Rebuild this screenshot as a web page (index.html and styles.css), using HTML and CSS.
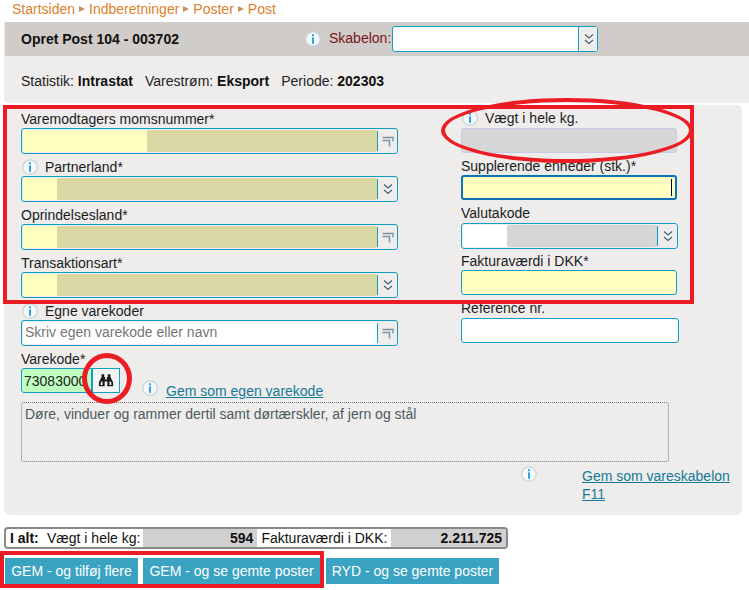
FILE: index.html
```html
<!DOCTYPE html>
<html lang="da">
<head>
<meta charset="utf-8">
<title>Opret Post</title>
<link rel="stylesheet" href="styles.css">
</head>
<body>
<svg class="defs" width="0" height="0" aria-hidden="true">
  <defs>
    <symbol id="info" viewBox="0 0 16 16">
      <circle cx="8" cy="8" r="7.2" fill="#f6f8f9" stroke="#c3d3da" stroke-width="1.2"/>
      <rect x="7" y="3.2" width="2" height="2" fill="#2aa6e6"/>
      <rect x="7" y="6.4" width="2" height="6.4" fill="#2aa6e6"/>
    </symbol>
    <symbol id="chev" viewBox="0 0 12 12">
      <path d="M2 1.500 6 5 10 1.500M2 7 6 10.500 10 7" fill="none" stroke="#3f5f75" stroke-width="1.100"/>
    </symbol>
    <symbol id="corner" viewBox="0 0 12 12">
      <path d="M0.500 2.500H11V6.500M0.500 5.500H7.500V11.500" fill="none" stroke="#7b93a1" stroke-width="1.400"/>
    </symbol>
  </defs>
</svg>

<nav class="crumbs">
  <span>Startsiden</span><i class="sep"></i><span>Indberetninger</span><i class="sep"></i><span>Poster</span><i class="sep"></i><span>Post</span>
</nav>

<header class="head">
  <div class="head-bar">
    <h1>Opret Post 104 - 003702</h1>
    <div class="skabelon">
      <svg class="ico"><use href="#info"/></svg>
      <label class="skabelon-label">Skabelon:</label>
      <div class="box box-template">
        <input class="inp white grow" type="text">
        <span class="addon"><svg class="ico-s"><use href="#chev"/></svg></span>
      </div>
    </div>
  </div>
  <p class="stat">Statistik: <b>Intrastat</b><span class="stat-gap"></span>Varestrøm: <b>Eksport</b><span class="stat-gap"></span>Periode: <b>202303</b></p>
</header>

<main class="panel">
  <div class="cols">
    <div class="col-left">
      <div class="fld">
        <label class="lbl">Varemodtagers momsnummer*</label>
        <div class="box">
          <input class="inp yellow w-124" type="text"><span class="redact olive"></span>
          <span class="addon"><svg class="ico-s"><use href="#corner"/></svg></span>
        </div>
      </div>
      <div class="fld">
        <label class="lbl"><svg class="ico"><use href="#info"/></svg>Partnerland*</label>
        <div class="box">
          <input class="inp yellow w-34" type="text"><span class="redact olive"></span>
          <span class="addon"><svg class="ico-s"><use href="#chev"/></svg></span>
        </div>
      </div>
      <div class="fld">
        <label class="lbl">Oprindelsesland*</label>
        <div class="box">
          <input class="inp yellow w-34" type="text"><span class="redact olive"></span>
          <span class="addon"><svg class="ico-s"><use href="#corner"/></svg></span>
        </div>
      </div>
      <div class="fld">
        <label class="lbl">Transaktionsart*</label>
        <div class="box">
          <input class="inp yellow w-34" type="text"><span class="redact olive"></span>
          <span class="addon"><svg class="ico-s"><use href="#chev"/></svg></span>
        </div>
      </div>
      <div class="fld">
        <label class="lbl"><svg class="ico"><use href="#info"/></svg>Egne varekoder</label>
        <div class="box">
          <input class="inp white grow ph" type="text" placeholder="Skriv egen varekode eller navn">
          <span class="addon"><svg class="ico-s"><use href="#corner"/></svg></span>
        </div>
      </div>
      <div class="fld">
        <label class="lbl">Varekode*</label>
        <div class="code-row">
          <input class="code" type="text" value="73083000">
          <button class="find" type="button" aria-label="Søg">
            <svg width="16" height="13" viewBox="0 0 18 14">
              <path fill="#1a1a1a" d="M4 0h3v3h1v3h2V3h1V0h3v3l3 6v4.500h-6.500V8H7.500v5.500H1V9l3-6z"/>
              <path fill="#fff" d="M4 8h1v4H3V9.500zM13 8h1l1 1.500V12h-2z"/>
            </svg>
          </button>
          <svg class="ico code-info"><use href="#info"/></svg>
          <a class="link code-link" href="#">Gem som egen varekode</a>
        </div>
      </div>
    </div>

    <div class="col-right">
      <div class="fld-r">
        <label class="lbl"><svg class="ico"><use href="#info"/></svg>Vægt i hele kg.</label>
        <div class="plain disabled"></div>
      </div>
      <div class="fld-r">
        <label class="lbl">Supplerende enheder (stk.)*</label>
        <div class="plain yellow focused"><i class="caret"></i></div>
      </div>
      <div class="fld-r">
        <label class="lbl">Valutakode</label>
        <div class="box box-r">
          <input class="inp white w-44" type="text"><span class="redact grey"></span>
          <span class="addon"><svg class="ico-s"><use href="#chev"/></svg></span>
        </div>
      </div>
      <div class="fld-r">
        <label class="lbl">Fakturaværdi i DKK*</label>
        <div class="plain yellow"></div>
      </div>
      <div class="fld-r">
        <label class="lbl">Reference nr.</label>
        <div class="plain white wide"></div>
      </div>
    </div>
  </div>

  <div class="desc">Døre, vinduer og rammer dertil samt dørtærskler, af jern og stål</div>

  <div class="foot-row">
    <svg class="ico foot-info"><use href="#info"/></svg>
    <a class="link foot-link" href="#">Gem som vareskabelon<br>F11</a>
  </div>
</main>

<section class="totals">
  <b class="tot-title">I alt:</b>
  <span class="tot-label">Vægt i hele kg:</span>
  <b class="tot-val tot-kg">594</b>
  <span class="tot-label">Fakturaværdi i DKK:</span>
  <b class="tot-val tot-dkk">2.211.725</b>
</section>

<div class="actions">
  <button class="btn btn-a" type="button">GEM - og tilføj flere</button>
  <button class="btn btn-b" type="button">GEM - og se gemte poster</button>
  <button class="btn btn-c" type="button">RYD - og se gemte poster</button>
</div>

<div class="mark mark-form"></div>
<div class="mark mark-ellipse"></div>
<div class="mark mark-circle"></div>
<div class="mark mark-btns"></div>
</body>
</html>
```
FILE: styles.css
```css
* { box-sizing: border-box; }
html, body { margin: 0; padding: 0; }
body {
  position: relative;
  width: 749px;
  height: 590px;
  overflow: hidden;
  background: #fff;
  font-family: "Liberation Sans", Arial, sans-serif;
  font-size: 14px;
  color: #1c1c1c;
}
.defs { position: absolute; }

/* breadcrumb */
.crumbs {
  display: flex;
  align-items: center;
  height: 22px;
  padding: 1px 0 5px 12px;
  line-height: 16px;
  color: #dd7f2c;
}
.sep {
  width: 0;
  height: 0;
  margin: 0 4px;
  border-left: 6px solid #c9925c;
  border-top: 3.5px solid transparent;
  border-bottom: 3.5px solid transparent;
}

/* header */
.head { margin-left: 4px; background: #eeedec; border-radius: 0 0 0 5px; height: 81px; }
.head-bar {
  height: 34px;
  margin-left: 1px;
  background: #d0ccc9;
  display: flex;
  align-items: center;
  padding-left: 16px;
}
.head-bar h1 { margin: 0; font-size: 14px; font-weight: bold; width: 284px; color: #111; }
.skabelon { display: flex; align-items: center; }
.skabelon-label { color: #7a1420; margin: -3px 0 0 8px; width: 63px; }
.ico { width: 16px; height: 16px; flex: none; display: block; }
.ico-s { width: 12px; height: 12px; display: block; }
.stat { margin: 0; padding: 17px 0 0 17px; line-height: 16px; color: #222; }
.stat b { color: #111; }
.stat-gap { display: inline-block; width: 12px; }

/* panel */
.panel {
  margin: 2px 7px 0 4px;
  height: 410px;
  background: #eeedec;
  border-radius: 5px;
  padding: 3px 0 0 17px;
}
.cols { display: flex; height: 294px; }
.col-left { width: 377px; margin-right: 63px; flex: none; }
.col-right { width: 218px; flex: none; }
.fld { height: 48px; }
.fld-r { height: 47.4px; }
.lbl {
  display: flex;
  align-items: center;
  gap: 7px;
  height: 20px;
  line-height: 20px;
  color: #1c1c1c;
}
.col-left .lbl { padding-top: 2px; }
.col-right .lbl { padding-top: 0.8px; }
.lbl .ico { margin-left: 1px; }

.box {
  display: flex;
  height: 26px;
  padding: 1px;
  background: #eeedec;
  border: 1px solid #0f9fc6;
  border-radius: 3px;
}
.box-template { width: 206px; height: 26px; background: #fff; }
.box-r { width: 217px; }
.inp {
  display: block;
  height: 100%;
  padding: 0 3px;
  margin: 0;
  border: 0;
  outline: 0;
  border-radius: 2px 0 0 2px;
  font: inherit;
  flex: none;
  min-width: 0;
}
.inp::placeholder { color: #767676; opacity: 1; }
.ph { padding: 0 2px 2px; }
.grow { flex: 1; }
.yellow { background: #ffffc0; }
.white { background: #fff; }
.w-124 { width: 124px; }
.w-34 { width: 34px; }
.w-44 { width: 44px; }
.redact { flex: 1; border-radius: 2px; }
.olive { background: #d9d7a3; }
.grey { background: #d6d6d6; }
.addon {
  flex: none;
  width: 19px;
  margin: 1px 0;
  border-left: 1px solid #0f9fc6;
  display: flex;
  align-items: center;
  justify-content: center;
  padding-left: 1px;
}
.box-template .addon { background: #eeedec; margin: -1px -1px -1px 0; }

.plain { width: 216px; height: 25px; border: 1px solid #0f9fc6; border-radius: 3px; }
.plain.wide { width: 218px; }
.plain.disabled { background: #d6d6d6; border-color: #c6cce6; }
.plain.focused {
  display: flex;
  justify-content: flex-end;
  align-items: center;
  padding-right: 3px;
  border: 2px solid #0e72b8;
}
.caret { width: 1px; height: 17px; background: #000; }

.code-row { display: flex; align-items: flex-start; }
.code {
  width: 71px;
  height: 25px;
  padding: 0 0 0 2px;
  border: 1px solid #0f9fc6;
  border-radius: 3px 0 0 3px;
  background: #bfffbf;
  font: inherit;
  color: #222;
  outline: 0;
}
.find {
  width: 28px;
  height: 25px;
  padding: 0;
  margin: 0;
  background: #f4f4f3;
  border: 1px solid #0f9fc6;
  display: flex;
  align-items: center;
  justify-content: center;
}
.code-info { margin: 12px 0 0 22px; }
.code-link { margin: 15px 0 0 8px; line-height: 16px; }
.link { color: #14799b; text-decoration: underline; }

.desc {
  width: 648px;
  height: 60px;
  border: 1px dotted #777;
  border-radius: 3px;
  padding: 3px 3px 0;
  line-height: 16px;
  color: #4c5a60;
}
.foot-row { display: flex; align-items: flex-start; }
.foot-info { margin: 4px 0 0 500px; }
.foot-link { margin: 5px 0 0 45px; line-height: 18px; }

/* totals */
.totals {
  display: flex;
  align-items: stretch;
  margin: 12px 0 0 4px;
  width: 504px;
  height: 22px;
  border: 2px solid #8a8a8a;
  border-radius: 4px;
  line-height: 18px;
  background: #fff;
  overflow: hidden;
  color: #111;
}
.tot-title { padding-left: 4px; width: 41px; flex: none; }
.tot-label { flex: none; white-space: nowrap; }
.tot-val { background: #d0d0d0; text-align: right; flex: none; padding-right: 4px; }
.tot-kg { width: 114px; margin: 0 4px 0 3px; }
.tot-dkk { flex: 1; margin-left: 4px; }

/* buttons */
.actions { display: flex; margin: 9px 0 0 5px; }
.btn {
  height: 26px;
  padding: 0;
  margin: 0;
  border: 0;
  background: #3aa3c2;
  color: #fff;
  font: inherit;
  flex: none;
}
.btn-a { width: 133px; margin-right: 5px; }
.btn-b { width: 177px; margin-right: 6px; }
.btn-c { width: 173px; }

/* red hand-drawn annotations */
.mark { position: absolute; border: 4px solid #ec1c24; pointer-events: none; }
.mark-form { left: 3px; top: 105px; width: 691px; height: 199px; }
.mark-ellipse { left: 441px; top: 98px; width: 252px; height: 65px; border-radius: 50%; }
.mark-circle { left: 82px; top: 353px; width: 50px; height: 51px; border-width: 5px; border-radius: 50%; }
.mark-btns { left: 0; top: 551px; width: 324px; height: 37px; }
```
